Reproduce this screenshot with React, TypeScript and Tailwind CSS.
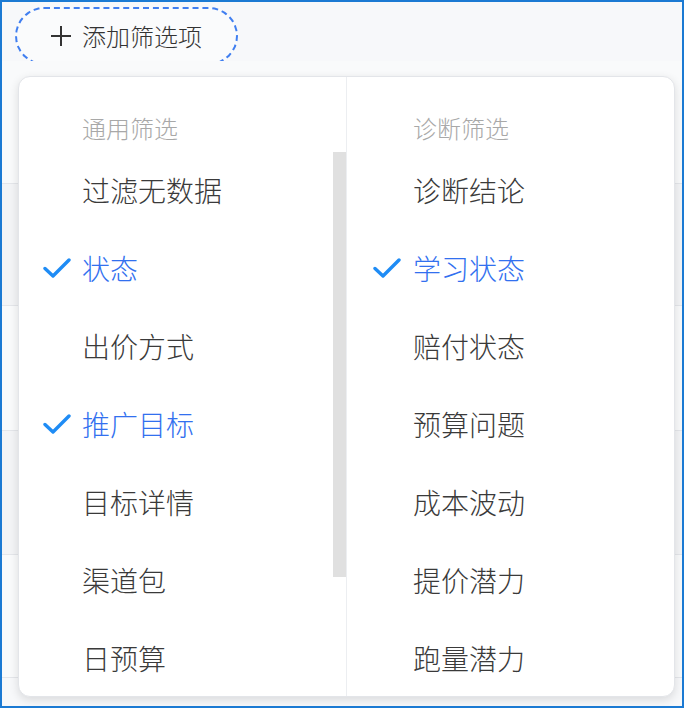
import React from "react";

const font = { fontFamily: '"Noto Sans CJK SC", "Noto Sans", sans-serif' };

function Check() {
  return (
    <svg width="28" height="22" viewBox="0 0 28 22" fill="none">
      <path d="M2 11.5 L10 19 L26 3" stroke="#1f8cf5" strokeWidth="3.4" strokeLinecap="round" strokeLinejoin="round" />
    </svg>
  );
}

type Item = { label: string; checked?: boolean };

const left: Item[] = [
  { label: "过滤无数据" },
  { label: "状态", checked: true },
  { label: "出价方式" },
  { label: "推广目标", checked: true },
  { label: "目标详情" },
  { label: "渠道包" },
  { label: "日预算" },
];

const right: Item[] = [
  { label: "诊断结论" },
  { label: "学习状态", checked: true },
  { label: "赔付状态" },
  { label: "预算问题" },
  { label: "成本波动" },
  { label: "提价潜力" },
  { label: "跑量潜力" },
];

function Column({ title, items, checkPad, checkW }: { title: string; items: Item[]; checkPad: string; checkW: string }) {
  return (
    <div className="flex flex-col">
      <div className={`mt-[31px] mb-[3px] h-[40px] leading-[40px] text-[24px] font-light text-[#a8a8a8] ${checkPad}`}>
        <div className="flex">
          <div className={`${checkW} shrink-0`} />
          <span>{title}</span>
        </div>
      </div>
      {items.map((it) => (
        <div key={it.label} className={`h-[78px] flex items-center shrink-0 ${checkPad}`}>
          <div className={`${checkW} shrink-0 flex items-center`}>{it.checked ? <Check /> : null}</div>
          <span className={`text-[28px] leading-[40px] font-light ${it.checked ? "text-[#3270ef]" : "text-[#3a3a3a]"}`}>{it.label}</span>
        </div>
      ))}
    </div>
  );
}

export default function App() {
  const rows = [123, 122, 125, 124, 123];
  return (
    <div style={font} className="w-[684px] h-[708px] border-2 border-[#1b7ad3] bg-[#f7f8fa] relative overflow-hidden">
      <div className="h-[59px] pt-[5px] pl-[13px]">
        <div className="w-[223px] h-[58px] rounded-full border-2 border-dashed border-[#3f7ef0] bg-white/40 flex items-center pl-[33px]">
          <svg width="22" height="22" viewBox="0 0 22 22" fill="none">
            <path d="M11 1 V21 M1 11 H21" stroke="#333" strokeWidth="2" />
          </svg>
          <span className="ml-[10px] text-[24px] leading-[30px] font-light text-[#333333]">添加筛选项</span>
        </div>
      </div>
      <div className="flex flex-col">
        {rows.map((h, i) => (
          <div
            key={i}
            style={{ height: h }}
            className={`border-b border-[#e4e6ea] ${i % 2 === 1 ? "bg-[#f3f4f6]" : "bg-[#f9fafb]"}`}
          />
        ))}
      </div>

      <div className="absolute left-[16px] top-[74px] w-[657px] h-[621px] bg-white rounded-[12px] border border-[#e3e5e9] shadow-[0_3px_10px_rgba(0,0,0,0.12)] flex overflow-hidden">
        <div className="relative w-[328px] shrink-0 border-r border-[#eceef1] overflow-hidden">
          <Column title="通用筛选" items={left} checkPad="pl-[24px]" checkW="w-[39px]" />
          <div className="absolute right-0 top-[75px] w-[13px] h-[425px] bg-[#e0e0e0]" />
        </div>
        <div className="flex-1 overflow-hidden">
          <Column title="诊断筛选" items={right} checkPad="pl-[26px]" checkW="w-[40px]" />
        </div>
      </div>
    </div>
  );
}
